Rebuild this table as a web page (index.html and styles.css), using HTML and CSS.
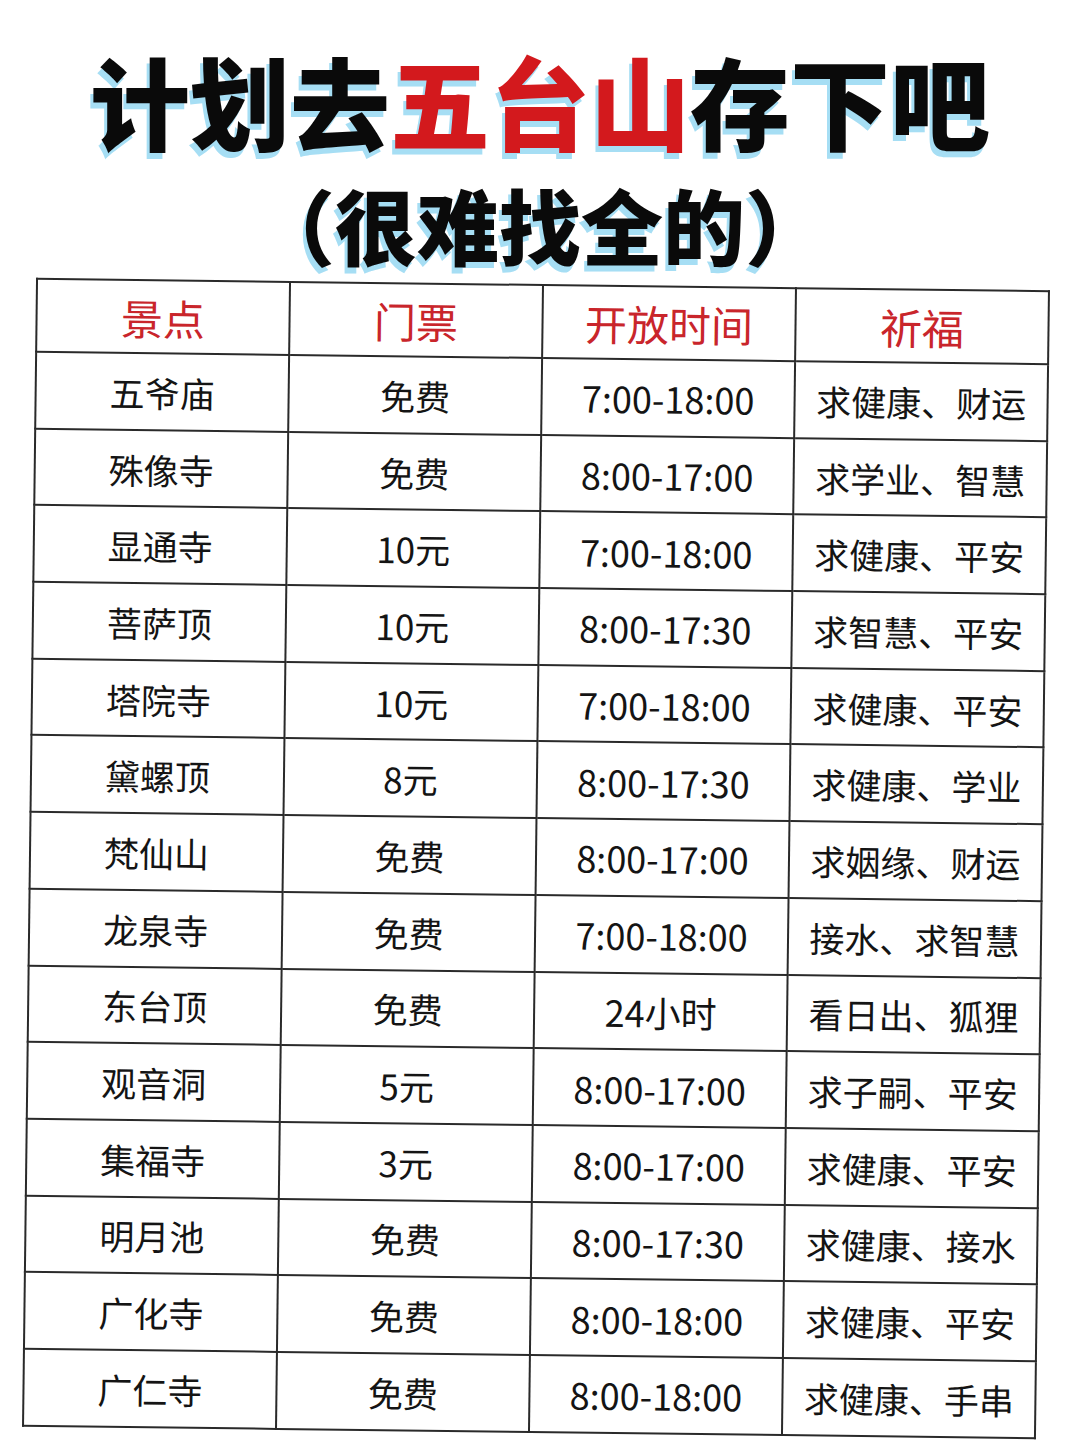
FILE: index.html
```html
<!DOCTYPE html>
<html lang="zh-CN">
<head>
<meta charset="utf-8">
<title>计划去五台山存下吧</title>
<link rel="stylesheet" href="styles.css">
</head>
<body>
<div class="page">
  <header class="title">
    <h1 class="line1">计划去<span class="red">五台山</span>存下吧</h1>
    <p class="line2">（很难找全的）</p>
  </header>
  <table class="grid">
    <thead>
      <tr><th>景点</th><th>门票</th><th>开放时间</th><th>祈福</th></tr>
    </thead>
    <tbody>
      <tr><td>五爷庙</td><td>免费</td><td class="time">7:00-18:00</td><td>求健康、财运</td></tr>
      <tr><td>殊像寺</td><td>免费</td><td class="time">8:00-17:00</td><td>求学业、智慧</td></tr>
      <tr><td>显通寺</td><td>10元</td><td class="time">7:00-18:00</td><td>求健康、平安</td></tr>
      <tr><td>菩萨顶</td><td>10元</td><td class="time">8:00-17:30</td><td>求智慧、平安</td></tr>
      <tr><td>塔院寺</td><td>10元</td><td class="time">7:00-18:00</td><td>求健康、平安</td></tr>
      <tr><td>黛螺顶</td><td>8元</td><td class="time">8:00-17:30</td><td>求健康、学业</td></tr>
      <tr><td>梵仙山</td><td>免费</td><td class="time">8:00-17:00</td><td>求姻缘、财运</td></tr>
      <tr><td>龙泉寺</td><td>免费</td><td class="time">7:00-18:00</td><td>接水、求智慧</td></tr>
      <tr><td>东台顶</td><td>免费</td><td class="time">24小时</td><td>看日出、狐狸</td></tr>
      <tr><td>观音洞</td><td>5元</td><td class="time">8:00-17:00</td><td>求子嗣、平安</td></tr>
      <tr><td>集福寺</td><td>3元</td><td class="time">8:00-17:00</td><td>求健康、平安</td></tr>
      <tr><td>明月池</td><td>免费</td><td class="time">8:00-17:30</td><td>求健康、接水</td></tr>
      <tr><td>广化寺</td><td>免费</td><td class="time">8:00-18:00</td><td>求健康、平安</td></tr>
      <tr><td>广仁寺</td><td>免费</td><td class="time">8:00-18:00</td><td>求健康、手串</td></tr>
    </tbody>
  </table>
</div>
</body>
</html>
```

FILE: styles.css
```css
html, body {
  margin: 0;
  padding: 0;
  background: #ffffff;
}
body {
  width: 1080px;
  height: 1440px;
  overflow: hidden;
  font-family: "Noto Sans CJK SC", "Noto Sans", sans-serif;
  color: #111111;
}
.page {
  display: flex;
  flex-direction: column;
  align-items: flex-start;
}
.title {
  width: 1080px;
  text-align: center;
  padding-top: 38px;
}
.line1 {
  margin: 0;
  font-size: 100px;
  line-height: 124px;
  font-weight: 900;
  color: #0a0a0a;
  text-shadow: -3px 6px 0 #a6def4;
}
.red {
  color: #d3191d;
}
.line2 {
  margin: 12px 0 0 0;
  font-size: 82px;
  line-height: 100px;
  font-weight: 900;
  color: #0a0a0a;
  text-shadow: -3px 6px 0 #a6def4;
}
.grid {
  margin-left: 29px;
  margin-top: 10px;
  width: 1014px;
  border-collapse: collapse;
  table-layout: fixed;
  transform: rotate(0.7deg);
  transform-origin: center center;
}
.grid th, .grid td {
  border: 2px solid #2a2a2a;
  text-align: center;
  vertical-align: middle;
  padding: 0;
  width: 25%;
}
.grid th {
  height: 71px;
  font-size: 42px;
  font-weight: 400;
  color: #c9252b;
}
.grid td {
  height: 74.7px;
  font-size: 35px;
  font-weight: 400;
  color: #141414;
}
.grid td.time {
  font-size: 36px;
}
```
